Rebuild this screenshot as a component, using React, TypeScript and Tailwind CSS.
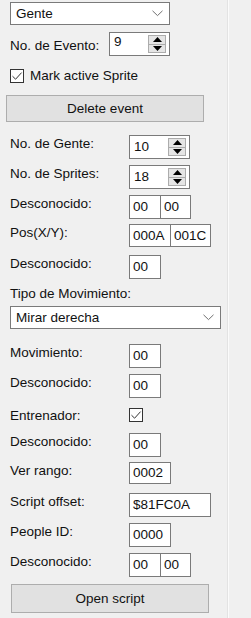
import React from "react"

function Chevron(): React.JSX.Element {
  return (
    <svg width="11" height="7" viewBox="0 0 11 7" fill="none" aria-hidden="true">
      <path d="M0.5 0.8 5.5 5.6 10.5 0.8" stroke="#707070" strokeWidth="1" />
    </svg>
  )
}

function CheckMark(): React.JSX.Element {
  return (
    <svg width="12" height="12" viewBox="0 0 12 12" fill="none" aria-hidden="true">
      <path d="M1.5 6.2 4.6 9.2 10.6 2.6" stroke="#333" strokeWidth="1" />
    </svg>
  )
}

function Checkbox(): React.JSX.Element {
  return (
    <span className="flex h-[14px] w-[14px] items-center justify-center border border-[#333] bg-white">
      <CheckMark />
    </span>
  )
}

function Combo({ value, width }: { value: string; width: string }): React.JSX.Element {
  return (
    <div className={`flex h-[23px] items-center justify-between border border-[#7a7a7a] bg-white pl-[5px] pr-[6px] ${width}`}>
      <span>{value}</span>
      <Chevron />
    </div>
  )
}

function Spinner(): React.JSX.Element {
  return (
    <div className="absolute bottom-[2px] right-[3px] top-[2px] flex w-[18px] flex-col">
      <div className="flex flex-1 items-center justify-center border border-[#acacac] bg-[#e5e5e5]">
        <svg width="9" height="5" viewBox="0 0 9 5" aria-hidden="true">
          <path d="M0 5 4.5 0 9 5Z" fill="#000" />
        </svg>
      </div>
      <div className="-mt-px flex flex-1 items-center justify-center border border-[#acacac] bg-[#e5e5e5]">
        <svg width="9" height="5" viewBox="0 0 9 5" aria-hidden="true">
          <path d="M0 0 4.5 5 9 0Z" fill="#000" />
        </svg>
      </div>
    </div>
  )
}

function NumBox({ value, top = false }: { value: string; top?: boolean }): React.JSX.Element {
  return (
    <div className={`relative flex h-[24px] w-[61px] border border-[#7a7a7a] bg-white pl-[4px] ${top ? "items-start pt-[1px]" : "items-center"}`}>
      <span>{value}</span>
      <Spinner />
    </div>
  )
}

function TextBox({ value, width, h = "h-[24px]" }: { value: string; width: string; h?: string }): React.JSX.Element {
  return (
    <div className={`flex items-center overflow-hidden whitespace-nowrap border border-[#7a7a7a] bg-white pl-[3px] ${width} ${h}`}>
      <span>{value}</span>
    </div>
  )
}

function PairBox({ a, b, wide = false }: { a: string; b: string; wide?: boolean }): React.JSX.Element {
  return (
    <div className="flex">
      <TextBox value={a} width={wide ? "w-[42px]" : "w-[32px]"} h={wide ? "h-[23px]" : "h-[24px]"} />
      <div className="-ml-px">
        <TextBox value={b} width={wide ? "w-[41px]" : "w-[31px]"} h={wide ? "h-[23px]" : "h-[24px]"} />
      </div>
    </div>
  )
}

function Row({ label, mt, children }: { label: string; mt: string; children: React.ReactNode }): React.JSX.Element {
  return (
    <div className={`flex items-start pl-[10px] ${mt}`}>
      <span className="mt-[1px] w-[119px] leading-[16px]">{label}</span>
      {children}
    </div>
  )
}

export default function App(): React.JSX.Element {
  return (
    <div className="flex h-[618px] w-[251px] overflow-hidden bg-[#f0f0f0] font-['Liberation_Sans',Arial,sans-serif] text-[13.5px] leading-[16px] text-[#111]">
      <div className="flex w-[227px] flex-col pt-[2px]">
        <div className="pl-[10px]">
          <Combo value="Gente" width="w-[160px]" />
        </div>

        <div className="mt-[7px] flex items-start pl-[10px]">
          <span className="mt-[6px] w-[99px]">No. de Evento:</span>
          <NumBox value="9" top />
        </div>

        <div className="mt-[12px] flex items-center gap-[6px] pl-[10px]">
          <Checkbox />
          <span>Mark active Sprite</span>
        </div>

        <div className="mt-[11px] pl-[6px]">
          <button className="flex h-[27px] w-[198px] items-center justify-center border border-[#adadad] bg-[#e1e1e1]">
            Delete event
          </button>
        </div>

        <Row label="No. de Gente:" mt="mt-[13px]">
          <NumBox value="10" />
        </Row>
        <Row label="No. de Sprites:" mt="mt-[6px]">
          <NumBox value="18" />
        </Row>
        <Row label="Desconocido:" mt="mt-[6px]">
          <PairBox a="00" b="00" />
        </Row>
        <Row label="Pos(X/Y):" mt="mt-[5px]">
          <PairBox a="000A" b="001C" wide />
        </Row>
        <Row label="Desconocido:" mt="mt-[8px]">
          <TextBox value="00" width="w-[32px]" />
        </Row>

        <div className="mt-[7px] pl-[10px]">Tipo de Movimiento:</div>
        <div className="mt-[4px] pl-[10px]">
          <Combo value="Mirar derecha" width="w-[211px]" />
        </div>

        <Row label="Movimiento:" mt="mt-[15px]">
          <TextBox value="00" width="w-[32px]" />
        </Row>
        <Row label="Desconocido:" mt="mt-[6px]">
          <TextBox value="00" width="w-[32px]" />
        </Row>
        <Row label="Entrenador:" mt="mt-[9px]">
          <div className="mt-[1px]">
            <Checkbox />
          </div>
        </Row>
        <Row label="Desconocido:" mt="mt-[9px]">
          <TextBox value="00" width="w-[32px]" />
        </Row>
        <Row label="Ver rango:" mt="mt-[5px]">
          <TextBox value="0002" width="w-[42px]" h="h-[22px]" />
        </Row>
        <Row label="Script offset:" mt="mt-[9px]">
          <TextBox value="$81FC0A" width="w-[82px]" />
        </Row>
        <Row label="People ID:" mt="mt-[6px]">
          <TextBox value="0000" width="w-[42px]" />
        </Row>
        <Row label="Desconocido:" mt="mt-[6px]">
          <PairBox a="00" b="00" />
        </Row>

        <div className="mt-[7px] pl-[11px]">
          <button className="flex h-[29px] w-[198px] items-center justify-center border border-[#adadad] bg-[#e1e1e1]">
            Open script
          </button>
        </div>
      </div>
      <div className="w-px bg-[#e3e3e3]" />
      <div className="w-px bg-[#fbfbfb]" />
      <div className="flex-1" />
    </div>
  )
}
